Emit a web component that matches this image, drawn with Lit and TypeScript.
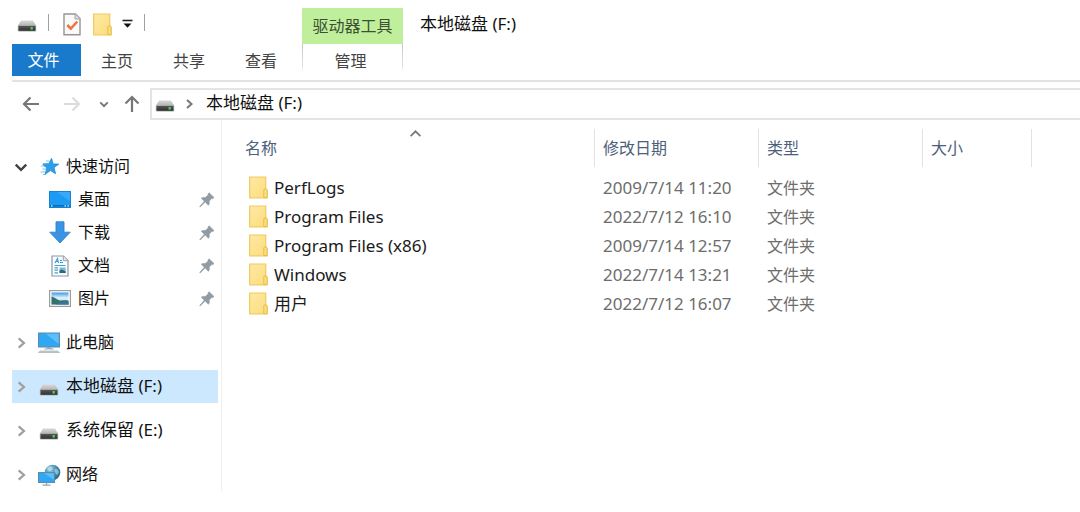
import { LitElement, html, css, svg } from "lit";
import { customElement, property, state } from "lit/decorators.js";

const driveIcon = html`<svg width="20" height="14" viewBox="0 0 20 14" aria-hidden="true">
  <defs><linearGradient id="dt" x1="0" y1="0" x2="0" y2="1"><stop offset="0" stop-color="#d9d9d9"/><stop offset="1" stop-color="#b4b4b4"/></linearGradient>
  <linearGradient id="db" x1="0" y1="0" x2="0" y2="1"><stop offset="0" stop-color="#555"/><stop offset="1" stop-color="#303030"/></linearGradient></defs>
  <path d="M4 1.5h12l3 5H1z" fill="url(#dt)"/>
  <rect x="0.8" y="6" width="18.4" height="6.6" rx="1" fill="#a9a9a9"/>
  <rect x="1.6" y="7" width="16.8" height="4.8" fill="url(#db)"/>
  <rect x="13.6" y="8" width="2.2" height="2.6" fill="#3fdc4c"/>
</svg>`;

const folderIcon = html`<svg width="19" height="23" viewBox="0 0 19 23" aria-hidden="true">
  <defs><linearGradient id="ff" x1="0" y1="0" x2="1" y2="1"><stop offset="0" stop-color="#ffe9a4"/><stop offset="1" stop-color="#fbdc7c"/></linearGradient></defs>
  <path d="M0.7 1h16v12.5l1.4 1V21.8H0.7z" fill="url(#ff)" stroke="#efcb5e" stroke-width="1.2"/>
  <path d="M14.8 21.6V14q0-1 1-1h1.300q1 0 1 1v7.6z" fill="#fbdf86" stroke="#e6bd49" stroke-width="1"/>
</svg>`;

const checkDocIcon = html`<svg width="18" height="23" viewBox="0 0 18 23" aria-hidden="true">
  <path d="M1 1h11.5l4.5 4.5v16.300H1z" fill="#fafafa" stroke="#959595" stroke-width="1.4"/>
  <path d="M12 1v5h5" fill="#ddd" stroke="#a5a5a5" stroke-width="1"/>
  <path d="M4.300 12l3.500 3.700 6.500-7.200" fill="none" stroke="#ee7440" stroke-width="2.600"/>
</svg>`;

const starIcon = html`<svg width="22" height="20" viewBox="0 0 22 20" aria-hidden="true">
  <path d="M5 6.500h5M3 9h5M4.500 12h4M2.500 15h5M5 17.500h3M8 4h3" stroke="#7cc4f0" stroke-width="1"/>
  <path d="M13.600 1.300l1.500 5.600 5.700.2-4.700 3.500 1.500 6.200-5.100-3.200-5.400 3.700 1.700-6.400-4-3.500 5.700-.5z" fill="#2c9fe8" stroke="#1684d0" stroke-width=".7"/>
</svg>`;

const desktopIcon = html`<svg width="22" height="17" viewBox="0 0 22 17" aria-hidden="true">
  <rect x=".5" y=".5" width="21" height="16" fill="#1c9bf5" stroke="#1583cf"/>
  <path d="M8 1h13v9z" fill="#3aaaf8"/>
  <path d="M1 14.800h20" stroke="#0b67ad" stroke-width="1.400"/>
  <path d="M2 14.800h1.500M15.500 14.800h1.500M18.500 14.800h1.500" stroke="#d7f0ff" stroke-width="1.300"/>
</svg>`;

const downloadIcon = html`<svg width="22" height="23" viewBox="0 0 22 23" aria-hidden="true">
  <path d="M7 .8h8v10.400h6.200L11 22 .8 11.200H7z" fill="#3b94e3" stroke="#2c82d0" stroke-width=".9"/>
</svg>`;

const documentIcon = html`<svg width="18" height="22" viewBox="0 0 18 22" aria-hidden="true">
  <path d="M1 1h11.500L17 5.500V21H1z" fill="#fbfdfe" stroke="#8d979d" stroke-width="1.200"/>
  <path d="M12.300 1v4.700H17" fill="#e3e8ea" stroke="#9aa4a9" stroke-width="1"/>
  <path d="M4 8l2.500-4.500L7.500 8M4.500 6.500h3M9 5.500h2M9 7.500h3" stroke="#2f9be0" stroke-width="1.100" fill="none"/>
  <path d="M3.500 10.500h11M3.500 12.800h3.500M3.500 15.200h3.500M3.500 17.800h3.500" stroke="#4aa0d4" stroke-width="1.200"/>
  <rect x="8.500" y="12.500" width="6.200" height="5.600" fill="#79b9dc"/><path d="M8.500 18v-2.500l2.500-1 3.700 2V18z" fill="#2f6b76"/>
</svg>`;

const pictureIcon = html`<svg width="22" height="17" viewBox="0 0 22 17" aria-hidden="true">
  <defs><linearGradient id="ps" x1="0" y1="0" x2="0" y2="1"><stop offset="0" stop-color="#3d97e4"/><stop offset=".45" stop-color="#e2f3fb"/><stop offset="1" stop-color="#9cc6dc"/></linearGradient></defs>
  <rect x=".6" y=".6" width="20.800" height="15.800" fill="#fff" stroke="#9c9c9c" stroke-width="1.200"/>
  <rect x="2.500" y="2.500" width="17" height="12" fill="url(#ps)"/>
  <path d="M2.500 6.500c3 .3 5 3.300 8 4 3 .4 6-.7 9 .3v3.700h-17z" fill="#33736c"/>
  <path d="M7 14.500c3-2.500 8-2.900 12.500-2.400v2.400z" fill="#3c74a4"/>
</svg>`;

const screen = (x: number, y: number, w: number, h: number) => svg`
  <rect x=${x} y=${y} width=${w} height=${h} fill="#31a7f3" stroke="#5d8ba8" stroke-width="1"/>
  <path d=${`M${x + w * 0.35} ${y + 0.8}H${x + w - 0.8}V${y + h - 3}z`} fill="#5fbffb"/>`;

const computerIcon = html`<svg width="24" height="22" viewBox="0 0 24 22" aria-hidden="true">
  ${screen(1.5, 1, 21, 14)}
  <path d="M10 15.500h4v1.500h2.500H7.500H10z" fill="#94a8b5" stroke="#94a8b5" stroke-width=".6"/>
  <path d="M1.500 20.500l1.800-1.500h17.400l1.800 1.500z" fill="#c5d0d8" stroke="#9eafba" stroke-width=".7"/>
</svg>`;

const networkIcon = html`<svg width="24" height="22" viewBox="0 0 24 22" aria-hidden="true">
  <defs><radialGradient id="gl" cx=".35" cy=".3" r=".8"><stop offset="0" stop-color="#9fcfe4"/><stop offset=".55" stop-color="#4189b0"/><stop offset="1" stop-color="#255e80"/></radialGradient></defs>
  <circle cx="15.500" cy="8.500" r="7.800" fill="url(#gl)"/>
  <path d="M11 3c2-1.500 4-.5 4.500 1S13 7.500 11.500 6.500 9.500 4 11 3zM18.500 5c1.500-.5 3 1 3.300 2.500s-1.500 4-2.500 3S17 5.500 18.500 5z" fill="#d7edf4" opacity=".5"/>
  ${screen(1.5, 8.5, 16, 10)}
  <path d="M9.500 18.800v2M5.500 21.200h8" stroke="#8fa5b3" stroke-width="1.300"/>
</svg>`;

const pinIcon = html`<svg class="pin" width="16" height="16" viewBox="0 0 16 16" aria-hidden="true">
  <path d="M10 .8l5 4.800-1.300 1-.9-.3-2.700 2.900c.5 1.700.2 2.900-.7 4L6.200 10 1.500 14.600.8 14.900 1.200 14 5.400 9.200 2.300 6.200c1.300-.9 2.700-1 4-.6l2.900-2.600L9 2z" fill="#919ba3" stroke="#919ba3" stroke-width=".7"/>
</svg>`;

const chevron = (dir: "right" | "down" | "up", size = 12, width = 2) => {
  const d = { right: "M4 2l4.500 4L4 10", down: "M1.500 4L6 8.500 10.500 4", up: "M1.500 8.500L6 4l4.500 4.500" }[dir];
  return html`<svg width=${size} height=${size} viewBox="0 0 12 12" aria-hidden="true">
    <path d=${d} fill="none" stroke="currentColor" stroke-width=${width}/></svg>`;
};

const arrowIcon = (d: string) => html`<svg width="18" height="18" viewBox="0 0 18 18" aria-hidden="true">
  <path d=${d} fill="none" stroke="currentColor" stroke-width="2.2"/></svg>`;

const base = css`
  * { box-sizing: border-box; }
  button {
    font: inherit; color: inherit; background: none; border: 0; padding: 0; margin: 0;
    display: flex; align-items: center; justify-content: center;
  }
  svg { display: block; flex: none; }
`;

@customElement("explorer-ribbon")
export class ExplorerRibbon extends LitElement {
  static styles = [base, css`
    :host { display: block; padding-left: 12px; }
    .ribbon { display: flex; border-bottom: 2px solid #e2e2e2; padding-bottom: 4px; }
    .left { margin-right: 5px; }
    .quick { display: flex; align-items: center; height: 44px; padding: 4px 0 0 5px; }
    .sep { width: 1px; height: 17px; background: #a0a0a0; margin-bottom: 4px; }
    .quick .drive { margin-right: 11px; padding-top: 4px; }
    .quick .props { margin: 0 12px 0 14px; }
    .quick .more { margin: 0 11px 0 10px; }
    .tabs { display: flex; }
    .tab { width: 72px; height: 32px; padding-top: 2px; color: #444; }
    .file { width: 69px; background: #1979ca; color: #fff; padding: 0 6px 0 0; }
    .context { padding-top: 8px; width: 101px; }
    .group { height: 36px; background: #c0ef9c; color: #3d4f35; display: flex; align-items: center; justify-content: center; }
    .manage {
      width: 100%; height: 32px; padding: 2px 4px 0 0; color: #444;
      border: 1px solid; border-width: 0 1px; border-image: linear-gradient(#c4c4c4, #e4e4e4 70%, #fff 85%) 1;
    }
    .title { margin: 0; padding: 12px 0 0 17px; font-size: 17px; line-height: 24px; font-weight: 400; color: #111; }
  `];

  render() {
    return html`<header class="ribbon">
      <div class="left">
        <div class="quick">
          <button class="drive" aria-label="本地磁盘">${driveIcon}</button>
          <span class="sep"></span>
          <button class="props" aria-label="属性">${checkDocIcon}</button>
          <button class="folder" aria-label="新建文件夹">${folderIcon}</button>
          <button class="more" aria-label="自定义快速访问工具栏">
            <svg width="11" height="10" viewBox="0 0 11 10" aria-hidden="true"><path d="M.5 1.500h10" stroke="#222" stroke-width="1.600"/><path d="M1.500 4.500h8l-4 4.300z" fill="#111"/></svg>
          </button>
          <span class="sep"></span>
        </div>
        <nav class="tabs">
          <button class="tab file">文件</button>
          <button class="tab">主页</button>
          <button class="tab">共享</button>
          <button class="tab">查看</button>
        </nav>
      </div>
      <div class="context">
        <div class="group">驱动器工具</div>
        <button class="manage">管理</button>
      </div>
      <h1 class="title">本地磁盘 (F:)</h1>
    </header>`;
  }
}

@customElement("explorer-address")
export class ExplorerAddress extends LitElement {
  static styles = [base, css`
    :host { display: block; padding: 6px 0 0 22px; }
    .bar { display: flex; align-items: center; height: 32px; color: #777; }
    .fwd { color: #dcdcdc; margin-left: 23px; }
    .recent { margin-left: 18px; }
    .up { margin: 0 9px 0 14px; }
    .path {
      flex: 1; height: 32px; display: flex; align-items: center;
      border: 2px solid #e4e4e4; border-right: 0; padding-left: 3px;
    }
    .drive { padding-top: 3px; }
    .next { margin: 0 11px 0 8px; }
    .crumb { font-size: 17px; color: #111; padding-bottom: 2px; }
  `];

  render() {
    return html`<nav class="bar">
      <button aria-label="后退">${arrowIcon("M17 9H2M8.500 2.500L2 9l6.500 6.500")}</button>
      <button class="fwd" aria-label="前进" disabled>${arrowIcon("M1 9h15M9.500 2.500L16 9l-6.500 6.500")}</button>
      <button class="recent" aria-label="最近浏览的位置">${chevron("down", 10, 2.4)}</button>
      <button class="up" aria-label="上移">${arrowIcon("M9 17V2M2.500 8.500L9 2l6.500 6.500")}</button>
      <div class="path">
        <span class="drive">${driveIcon}</span>
        <button class="next" aria-label="展开">${chevron("right", 12)}</button>
        <button class="crumb">本地磁盘 (F:)</button>
      </div>
    </nav>`;
  }
}

@customElement("nav-item")
export class NavItem extends LitElement {
  @property() label = "";
  @property({ attribute: false }) icon: unknown;
  @property({ type: Boolean }) child = false;
  @property({ type: Boolean }) open = false;
  @property({ type: Boolean }) selected = false;
  @property({ type: Boolean }) drive = false;

  static styles = [base, css`
    :host { display: block; }
    .row { display: flex; align-items: center; height: 33px; }
    .selected { background: #cce8ff; }
    .child { padding: 0 3px 0 36px; }
    .toggle { width: 18px; height: 33px; color: #a0a0a0; }
    .opened { color: #404040; }
    .link { flex: 1; justify-content: flex-start; height: 33px; color: #111; }
    .icon { width: 24px; margin: 0 5px 0 7px; display: flex; justify-content: center; }
    .child .icon { margin: 0 6px 0 0; }
    .drive { padding-top: 6px; }
    .wide { font-size: 17px; }
    .text { padding-bottom: 1px; }
  `];

  render() {
    return html`<div class="row ${this.child ? "child" : ""} ${this.selected ? "selected" : ""}">
      ${this.child ? "" : html`<button class="toggle ${this.open ? "opened" : ""}" aria-label="展开或折叠">${chevron(this.open ? "down" : "right", 14)}</button>`}
      <button class="link"><span class="icon ${this.drive ? "drive" : ""}">${this.icon}</span><span class="text ${this.drive ? "wide" : ""}">${this.label}</span></button>
      ${this.child ? pinIcon : ""}
    </div>`;
  }
}

@customElement("file-list")
export class FileList extends LitElement {
  @state() private files = [
    ["PerfLogs", "2009/7/14 11:20"],
    ["Program Files", "2022/7/12 16:10"],
    ["Program Files (x86)", "2009/7/14 12:57"],
    ["Windows", "2022/7/14 13:21"],
    ["用户", "2022/7/12 16:07"],
  ];

  static styles = [base, css`
    :host { display: block; flex: 1; padding: 9px 0 0 15px; min-width: 0; }
    table { border-collapse: separate; border-spacing: 0; table-layout: fixed; width: 795px; }
    .name { width: 358px; }
    .col { width: 164px; }
    .size { width: 109px; }
    th { position: relative; height: 38px; padding: 0 8px; border-right: 1px solid #e2e2e2; text-align: left; font-weight: 400; color: #4c607a; }
    td { height: 29px; padding: 0 8px; color: #6d6d6d; line-height: 24px; white-space: nowrap; }
    .sort { position: absolute; top: -2px; left: 0; right: 0; display: flex; justify-content: center; color: #777; }
    .file { display: flex; align-items: center; gap: 6px; padding-left: 4px; color: #1b1b1b; font-size: 17px; }
    .date { font-size: 17px; }
    .gap td { height: 6px; }
  `];

  render() {
    return html`<table>
      <thead><tr>
        <th class="name">名称<span class="sort">${chevron("up", 13, 1.6)}</span></th>
        <th class="col">修改日期</th><th class="col">类型</th><th class="size">大小</th>
      </tr></thead>
      <tbody>
        <tr class="gap"><td colspan="4"></td></tr>
        ${this.files.map(([name, date]) => html`<tr>
          <td><span class="file">${folderIcon}${name}</span></td>
          <td class="date">${date}</td><td>文件夹</td><td></td>
        </tr>`)}
      </tbody>
    </table>`;
  }
}

@customElement("app-root")
export class AppRoot extends LitElement {
  static styles = css`
    :host {
      display: block; min-height: 100vh; background: #fff; overflow: hidden;
      font: 16px/24px "Noto Sans", "Noto Sans CJK SC", sans-serif;
    }
    .body { display: flex; align-items: flex-start; }
    .side {
      box-sizing: border-box; flex: none; width: 222px; padding: 30px 3px 0 12px; border-right: 1px solid #f0f0f0;
      display: flex; flex-direction: column; gap: 11px;
    }
  `;

  render() {
    return html`
      <explorer-ribbon></explorer-ribbon>
      <explorer-address></explorer-address>
      <main class="body">
        <nav class="side">
          <div>
            <nav-item label="快速访问" open .icon=${starIcon}></nav-item>
            <nav-item label="桌面" child .icon=${desktopIcon}></nav-item>
            <nav-item label="下载" child .icon=${downloadIcon}></nav-item>
            <nav-item label="文档" child .icon=${documentIcon}></nav-item>
            <nav-item label="图片" child .icon=${pictureIcon}></nav-item>
          </div>
          <nav-item label="此电脑" .icon=${computerIcon}></nav-item>
          <nav-item label="本地磁盘 (F:)" drive selected .icon=${driveIcon}></nav-item>
          <nav-item label="系统保留 (E:)" drive .icon=${driveIcon}></nav-item>
          <nav-item label="网络" .icon=${networkIcon}></nav-item>
        </nav>
        <file-list></file-list>
      </main>`;
  }
}
